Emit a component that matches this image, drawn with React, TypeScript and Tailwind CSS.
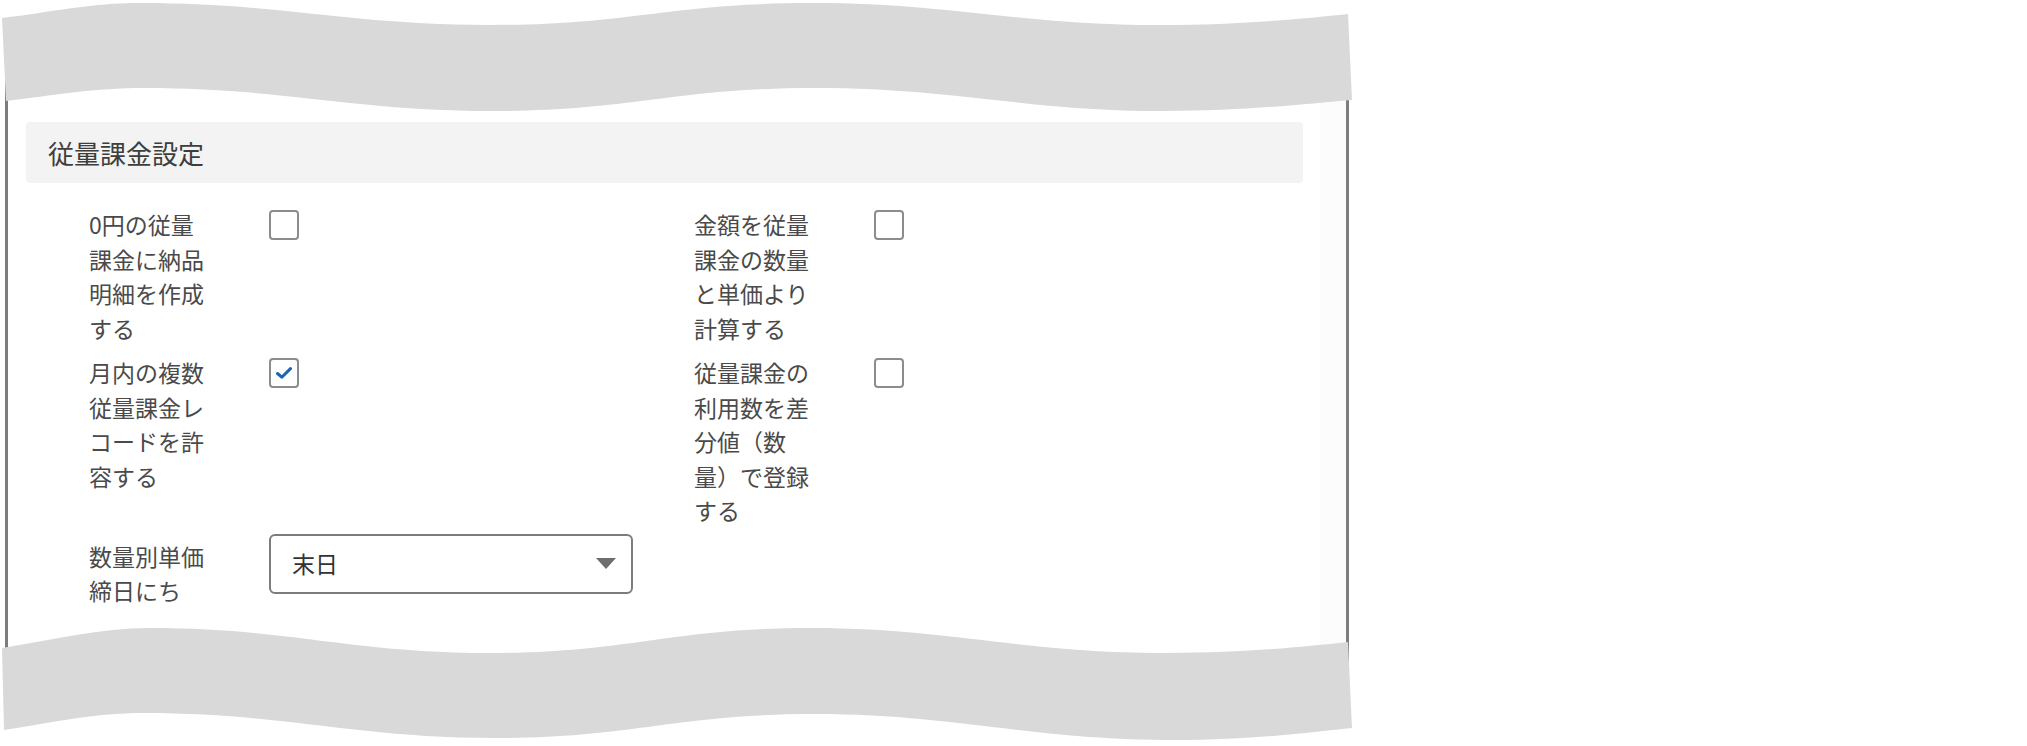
import React from "react";

type Field = {
  lines: string[];
  checked?: boolean;
};

function Checkbox({ checked }: { checked?: boolean }) {
  return (
    <div className="w-[30px] h-[30px] shrink-0 rounded-[4px] border-2 border-[#8c8c8c] bg-white flex items-center justify-center">
      {checked && (
        <svg width="18" height="14" viewBox="0 0 18 14">
          <path
            d="M2.5 7.5 L6.8 11.2 L15.5 2.6"
            fill="none"
            stroke="#1b63b3"
            strokeWidth="3"
            strokeLinecap="round"
            strokeLinejoin="round"
          />
        </svg>
      )}
    </div>
  );
}

function Label({ lines, className = "" }: { lines: string[]; className?: string }) {
  return (
    <div className={`w-[180px] shrink-0 text-[23px] leading-[34.5px] text-[#4a4a4a] ${className}`}>
      {lines.map((l, i) => (
        <React.Fragment key={i}>
          {l}
          {i < lines.length - 1 && <br />}
        </React.Fragment>
      ))}
    </div>
  );
}

function CheckField({ lines, checked }: Field) {
  return (
    <div className="flex">
      <Label lines={lines} className="-mt-[3px]" />
      <Checkbox checked={checked} />
    </div>
  );
}

function TornEdges() {
  return (
    <svg
      className="absolute left-0 top-0 pointer-events-none"
      width="1360"
      height="746"
      viewBox="0 0 1360 746"
    >
      <path
        fill="#d9d9d9"
        d="M2 18 C52 12 90 3 140 3 C280 3 350 25 490 25 C630 25 670 3 811 3 C950 3 1020 25 1160 25 C1240 25 1300 19 1348 14 L1352 100 C1304 104 1244 111 1164 111 C1024 111 954 88 815 88 C674 88 634 111 494 111 C354 111 284 88 144 88 C94 88 56 95 6 101 Z"
      />
      <path
        fill="#d9d9d9"
        d="M2 648 C52 640 100 628 150 628 C290 628 350 653 490 653 C630 653 670 628 811 628 C950 628 1020 653 1165 653 C1245 653 1300 647 1348 642 L1352 728 C1304 733 1250 740 1175 740 C1030 740 954 714 815 714 C674 714 634 738 494 738 C354 738 284 713 144 713 C94 713 56 722 4 730 Z"
      />
    </svg>
  );
}

export default function App() {
  return (
    <div
      className="relative w-[2027px] h-[746px] overflow-hidden bg-white pt-[40px]"
      style={{ fontFamily: '"Noto Sans CJK JP", "Noto Sans", sans-serif' }}
    >
      <div className="ml-[5px] w-[1344px] h-[650px] border-x-[3px] border-[#7d7d7d] flex">
        <div className="flex-1 pl-[18px] pr-[17px] pt-[82px]">
          <div className="h-[61px] rounded-[4px] bg-[#f3f3f3] flex items-center pl-[22px] text-[26px] text-[#3e3e3c]">
            従量課金設定
          </div>

          <div className="mt-[27px] pl-[63px] flex flex-col">
            <div className="flex">
              <div className="w-[605px]">
                <CheckField lines={["0円の従量", "課金に納品", "明細を作成", "する"]} />
              </div>
              <CheckField lines={["金額を従量", "課金の数量", "と単価より", "計算する"]} />
            </div>

            <div className="flex mt-[13px]">
              <div className="w-[605px]">
                <CheckField lines={["月内の複数", "従量課金レ", "コードを許", "容する"]} checked />
              </div>
              <CheckField lines={["従量課金の", "利用数を差", "分値（数", "量）で登録", "する"]} />
            </div>

            <div className="flex mt-[6px]">
              <Label lines={["数量別単価", "締日にち"]} className="pt-[5px]" />
              <div className="w-[364px] h-[60px] rounded-[6px] border-2 border-[#7c7c7c] bg-white flex items-center justify-between pl-[21px] pr-[15px] text-[23px] text-[#333333]">
                <span>末日</span>
                <svg width="20" height="12" viewBox="0 0 20 12">
                  <path d="M0 0 H20 L10 11 Z" fill="#706e6b" />
                </svg>
              </div>
            </div>
          </div>
        </div>
        <div className="w-[26px] bg-[#fcfcfc]" />
      </div>
      <TornEdges />
    </div>
  );
}
